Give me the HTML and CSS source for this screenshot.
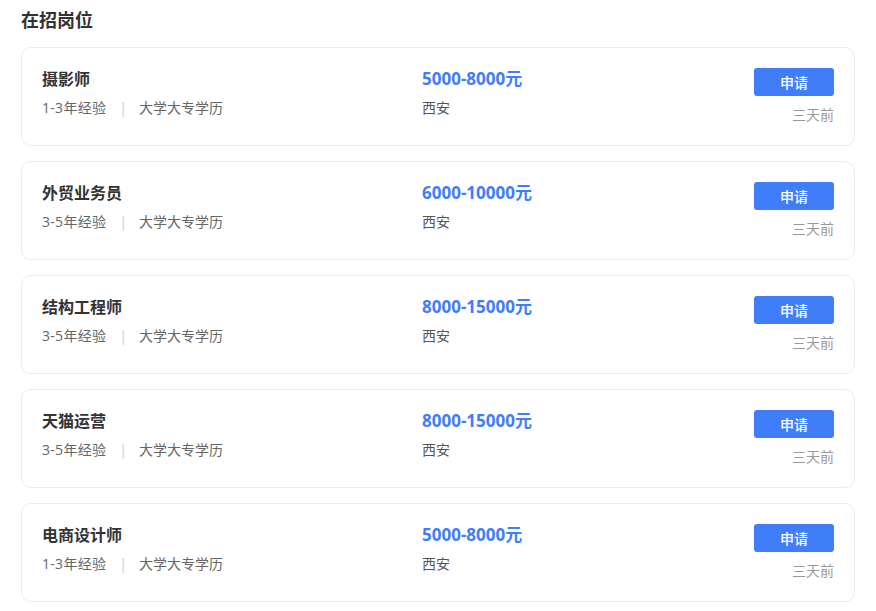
FILE: index.html
```html
<!DOCTYPE html>
<html lang="zh-CN">
<head>
<meta charset="utf-8">
<title>在招岗位</title>
<link rel="stylesheet" href="styles.css">
</head>
<body>
<section class="jobs">
  <h2 class="jobs-title">在招岗位</h2>
  <ul class="job-list">
    <li class="job-card">
      <div class="job-main">
        <div class="job-name">摄影师</div>
        <div class="job-meta"><span>1-3年经验</span><span class="sep">|</span><span>大学大专学历</span></div>
      </div>
      <div class="job-pay">
        <div class="job-salary">5000-8000元</div>
        <div class="job-city">西安</div>
      </div>
      <div class="job-side">
        <button class="apply-btn">申请</button>
        <div class="job-time">三天前</div>
      </div>
    </li>
    <li class="job-card">
      <div class="job-main">
        <div class="job-name">外贸业务员</div>
        <div class="job-meta"><span>3-5年经验</span><span class="sep">|</span><span>大学大专学历</span></div>
      </div>
      <div class="job-pay">
        <div class="job-salary">6000-10000元</div>
        <div class="job-city">西安</div>
      </div>
      <div class="job-side">
        <button class="apply-btn">申请</button>
        <div class="job-time">三天前</div>
      </div>
    </li>
    <li class="job-card">
      <div class="job-main">
        <div class="job-name">结构工程师</div>
        <div class="job-meta"><span>3-5年经验</span><span class="sep">|</span><span>大学大专学历</span></div>
      </div>
      <div class="job-pay">
        <div class="job-salary">8000-15000元</div>
        <div class="job-city">西安</div>
      </div>
      <div class="job-side">
        <button class="apply-btn">申请</button>
        <div class="job-time">三天前</div>
      </div>
    </li>
    <li class="job-card">
      <div class="job-main">
        <div class="job-name">天猫运营</div>
        <div class="job-meta"><span>3-5年经验</span><span class="sep">|</span><span>大学大专学历</span></div>
      </div>
      <div class="job-pay">
        <div class="job-salary">8000-15000元</div>
        <div class="job-city">西安</div>
      </div>
      <div class="job-side">
        <button class="apply-btn">申请</button>
        <div class="job-time">三天前</div>
      </div>
    </li>
    <li class="job-card">
      <div class="job-main">
        <div class="job-name">电商设计师</div>
        <div class="job-meta"><span>1-3年经验</span><span class="sep">|</span><span>大学大专学历</span></div>
      </div>
      <div class="job-pay">
        <div class="job-salary">5000-8000元</div>
        <div class="job-city">西安</div>
      </div>
      <div class="job-side">
        <button class="apply-btn">申请</button>
        <div class="job-time">三天前</div>
      </div>
    </li>
  </ul>
</section>
</body>
</html>
```
FILE: styles.css
```css
* { box-sizing: border-box; }
html, body { margin: 0; padding: 0; background: #fff; }
body {
  font-family: "Open Sans", "Noto Sans CJK SC", sans-serif;
  color: #333;
}
.jobs { padding: 8px 21px 0 21px; }
.jobs-title {
  margin: 0 0 15px 0;
  font-size: 18px;
  line-height: 24px;
  font-weight: 700;
  color: #333;
}
.job-list {
  list-style: none;
  margin: 0;
  padding: 0;
  display: flex;
  flex-direction: column;
  gap: 15px;
}
.job-card {
  display: grid;
  grid-template-columns: 380px 1fr auto;
  border: 1px solid #ececec;
  border-radius: 10px;
  padding: 20px;
  height: 99px;
}
.job-name {
  font-size: 16px;
  line-height: 22px;
  font-weight: 700;
  color: #333;
}
.job-meta {
  margin-top: 8px;
  font-size: 14px;
  line-height: 20px;
  color: #666;
  display: flex;
}
.job-meta span:first-child { letter-spacing: 0.3px; }
.sep { color: #c8ccd4; margin: 0 12px 0 13px; }
.job-salary {
  font-size: 17px;
  line-height: 22px;
  font-weight: 700;
  color: #3f7ef8;
}
.job-city {
  margin-top: 8px;
  font-size: 14px;
  line-height: 20px;
  color: #555;
}
.job-side {
  display: flex;
  flex-direction: column;
  align-items: flex-end;
}
.apply-btn {
  width: 80px;
  height: 28px;
  border: none;
  border-radius: 3px;
  background: #3f7ef8;
  color: #fff;
  font-family: "Noto Sans CJK SC", sans-serif;
  font-size: 14px;
  font-weight: 500;
  padding: 0;
}
.job-time {
  margin-top: 9px;
  font-size: 14px;
  line-height: 20px;
  color: #999;
}
```
